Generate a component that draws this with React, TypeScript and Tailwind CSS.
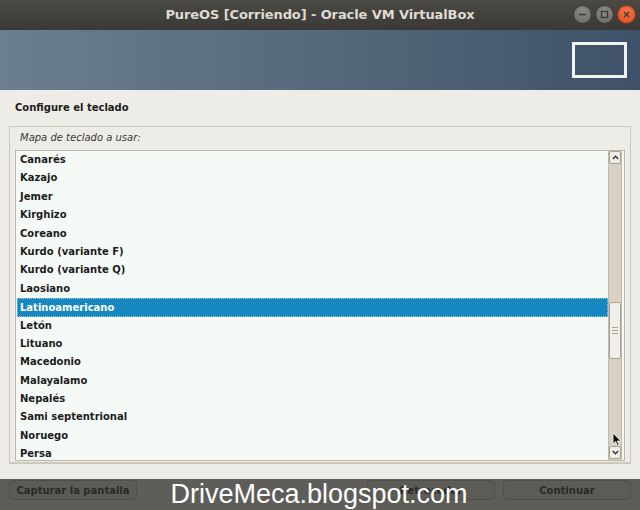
const layouts = [
  "Canarés",
  "Kazajo",
  "Jemer",
  "Kirghizo",
  "Coreano",
  "Kurdo (variante F)",
  "Kurdo (variante Q)",
  "Laosiano",
  "Latinoamericano",
  "Letón",
  "Lituano",
  "Macedonio",
  "Malayalamo",
  "Nepalés",
  "Sami septentrional",
  "Noruego",
  "Persa",
];

const SELECTED = "Latinoamericano";

const WinButton = ({ kind }: { kind: "min" | "max" | "close" }) => {
  const bg =
    kind === "close"
      ? "bg-[radial-gradient(circle_at_50%_35%,#f47a4a,#d9481a)] border-[#8a3a1c]"
      : "bg-[radial-gradient(circle_at_50%_35%,#8e8d88,#66655f)] border-[#3a3935]";
  return (
    <div className={`w-[19px] h-[19px] rounded-full border ${bg} flex items-center justify-center`}>
      <svg width="9" height="9" viewBox="0 0 9 9">
        {kind === "min" && <line x1="1" y1="4.5" x2="8" y2="4.5" stroke="#3c3b37" strokeWidth="1.6" />}
        {kind === "max" && <rect x="1.5" y="1.5" width="6" height="6" fill="none" stroke="#3c3b37" strokeWidth="1.4" />}
        {kind === "close" && (
          <path d="M2 2 L7 7 M7 2 L2 7" stroke="#3c3b37" strokeWidth="1.5" />
        )}
      </svg>
    </div>
  );
};

const Button = ({ label }: { label: string }) => (
  <div className="w-[128px] h-[20px] rounded-[3px] border border-[#b8b2a4] bg-[#e6e3dc] flex items-center justify-center text-[10px] font-bold text-[#1c1c1c]">
    {label}
  </div>
);

const App = () => {
  return (
    <div className="relative w-[640px] h-[510px] overflow-hidden bg-[#edece6] font-['DejaVu_Sans',sans-serif]">
      {/* title bar */}
      <div className="h-[30px] bg-gradient-to-b from-[#4a4944] to-[#3a3935] flex items-center relative">
        <div className="flex-1 text-center text-[13px] font-bold text-[#dfdbd2] tracking-[-0.1px]">
          PureOS [Corriendo] - Oracle VM VirtualBox
        </div>
        <div className="absolute right-[4px] top-[5px] flex gap-[3px]">
          <WinButton kind="min" />
          <WinButton kind="max" />
          <WinButton kind="close" />
        </div>
      </div>

      {/* banner */}
      <div className="h-[60px] bg-gradient-to-r from-[#6c7f8e] via-[#56697c] to-[#3f5168] flex justify-end items-start pt-[12px] pr-[13px]">
        <div className="w-[55px] h-[36px] border-[3px] border-[#f2f2f0]" />
      </div>

      {/* content */}
      <div className="px-[9px] pt-[9px]">
        <div className="pl-[6px] text-[10px] font-bold text-[#1c1c1c] h-[17px] leading-[17px]">
          Configure el teclado
        </div>
        <div className="mt-[10px] border border-[#cdc8bc] border-b-[2px] h-[338px] px-[5px] pt-[3px]">
          <div className="pl-[5px] text-[10px] italic text-[#3a3a3a] h-[20px] leading-[16px]">
            Mapa de teclado a usar:
          </div>
          <div className="border border-[#bdb7aa] bg-[#f5faf7] h-[311px] flex">
            <div className="flex-1 pl-[1px]">
              {layouts.map((l) => (
                <div
                  key={l}
                  className={
                    l === SELECTED
                      ? "h-[18.4px] leading-[17px] pl-[2px] text-[10px] font-bold text-white bg-[#1787c0] border border-dotted border-[#9fd0ea]"
                      : "h-[18.4px] leading-[18px] pl-[3px] text-[10px] font-bold text-[#1c1c1c]"
                  }
                >
                  {l}
                </div>
              ))}
            </div>
            {/* scrollbar */}
            <div className="w-[14px] mr-[2px] bg-[#d8d1c4] border-x border-[#c2baa9] flex flex-col">
              <div className="h-[13px] bg-[#efede8] border border-[#a9a292] rounded-[2px] flex items-center justify-center">
                <svg width="7" height="5" viewBox="0 0 7 5">
                  <path d="M0.8 4 L3.5 1.2 L6.2 4" fill="none" stroke="#333" strokeWidth="1.3" />
                </svg>
              </div>
              <div className="h-[138px]" />
              <div className="h-[57px] bg-[#f0efeb] border border-[#a9a292] rounded-[2px] flex flex-col items-center justify-center gap-[2px]">
                <div className="w-[6px] h-px bg-[#a8a49a]" />
                <div className="w-[6px] h-px bg-[#a8a49a]" />
                <div className="w-[6px] h-px bg-[#a8a49a]" />
              </div>
              <div className="flex-1" />
              <div className="h-[13px] mb-[1px] bg-[#efede8] border border-[#a9a292] rounded-[2px] flex items-center justify-center">
                <svg width="7" height="5" viewBox="0 0 7 5">
                  <path d="M0.8 1 L3.5 3.8 L6.2 1" fill="none" stroke="#333" strokeWidth="1.3" />
                </svg>
              </div>
            </div>
          </div>
        </div>

        {/* buttons */}
        <div className="mt-[16px] flex items-center">
          <Button label="Capturar la pantalla" />
          <div className="flex-1" />
          <Button label="Retroceder" />
          <div className="w-[8px]" />
          <Button label="Continuar" />
        </div>
      </div>

      {/* mouse pointer */}
      <svg className="absolute left-[612px] top-[432px]" width="10" height="15" viewBox="0 0 10 15">
        <path d="M1 1 L1 12 L3.6 9.6 L5.6 14 L7.2 13.3 L5.3 9 L8.8 9 Z" fill="#111" stroke="#fff" strokeWidth="0.8" />
      </svg>

      {/* watermark band */}
      <div className="absolute left-0 right-0 top-[479px] h-[31px] bg-[#2e2e2a]/75 flex items-center justify-center">
        <span className="font-['Liberation_Sans',Arial,sans-serif] text-[27px] text-white leading-none pr-[2px]">
          DriveMeca.blogspot.com
        </span>
      </div>
    </div>
  );
};

export default App;
